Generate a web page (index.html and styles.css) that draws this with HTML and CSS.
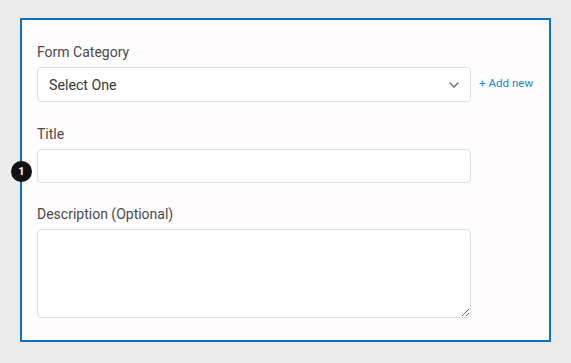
FILE: index.html
```html
<!DOCTYPE html>
<html lang="en">
<head>
    <meta charset="UTF-8">
    <meta name="viewport" content="width=device-width, initial-scale=1.0">
    <title>New Form</title>
    <link rel="stylesheet" href="styles.css">
</head>
<body>
    <div class="form-frame">
        <div class="field-group">
            <label class="field-label">Form Category</label>
            <div class="select-row">
                <div class="select-box">
                    <span class="select-text">Select One</span>
                    <svg class="chevron" width="12" height="8" viewBox="0 0 12 8">
                        <path d="M1.5 1.5 L6 6 L10.5 1.5" fill="none" stroke="#6b6b6b" stroke-width="1.3"/>
                    </svg>
                </div>
                <a class="add-new" href="#">+ Add new</a>
            </div>
        </div>
        <div class="field-group title-group">
            <label class="field-label">Title</label>
            <div class="input-wrap">
                <span class="step-badge">1</span>
                <input class="text-input" type="text">
            </div>
        </div>
        <div class="field-group last">
            <label class="field-label">Description (Optional)</label>
            <textarea class="text-area"></textarea>
        </div>
    </div>
</body>
</html>
```
FILE: styles.css
```css
body {
    margin: 0;
    background-color: #ebebeb;
    font-family: Roboto, "Liberation Sans", sans-serif;
}

.form-frame {
    box-sizing: border-box;
    width: 531px;
    height: 324px;
    margin: 18px 0 0 20px;
    padding: 22px 15px 0 15px;
    border: 2px solid #0a70c4;
    background-color: #fefcfd;
}

.field-group {
    margin-bottom: 22px;
}

.field-group.title-group {
    margin-bottom: 21px;
}

.field-group.last {
    margin-bottom: 0;
}

.field-label {
    display: block;
    font-size: 14px;
    line-height: 20px;
    color: #4a4a4a;
    margin-bottom: 5px;
}

.select-row {
    display: flex;
    align-items: center;
    gap: 8px;
}

.select-box {
    box-sizing: border-box;
    width: 434px;
    height: 35px;
    display: flex;
    align-items: center;
    justify-content: space-between;
    padding: 0 10px 0 11px;
    border: 1px solid #dcdfe3;
    border-radius: 4px;
    background-color: #ffffff;
}

.select-text {
    font-size: 14.2px;
    color: #3a3a3a;
}

.chevron {
    margin-top: 1px;
}

.add-new {
    font-size: 11.6px;
    color: #1a8cc4;
    text-decoration: none;
    margin-top: -4px;
}

.input-wrap {
    position: relative;
}

.text-input, .text-area {
    box-sizing: border-box;
    display: block;
    width: 434px;
    border: 1px solid #dcdfe3;
    border-radius: 4px;
    background-color: #ffffff;
    margin: 0;
    font-family: inherit;
}

.text-input {
    height: 34px;
}

.text-area {
    height: 89px;
}

.step-badge {
    position: absolute;
    left: -26px;
    top: 12px;
    width: 21px;
    height: 21px;
    border-radius: 50%;
    background-color: #111111;
    color: #ffffff;
    font-size: 11px;
    font-weight: bold;
    line-height: 21px;
    text-align: center;
}
```
